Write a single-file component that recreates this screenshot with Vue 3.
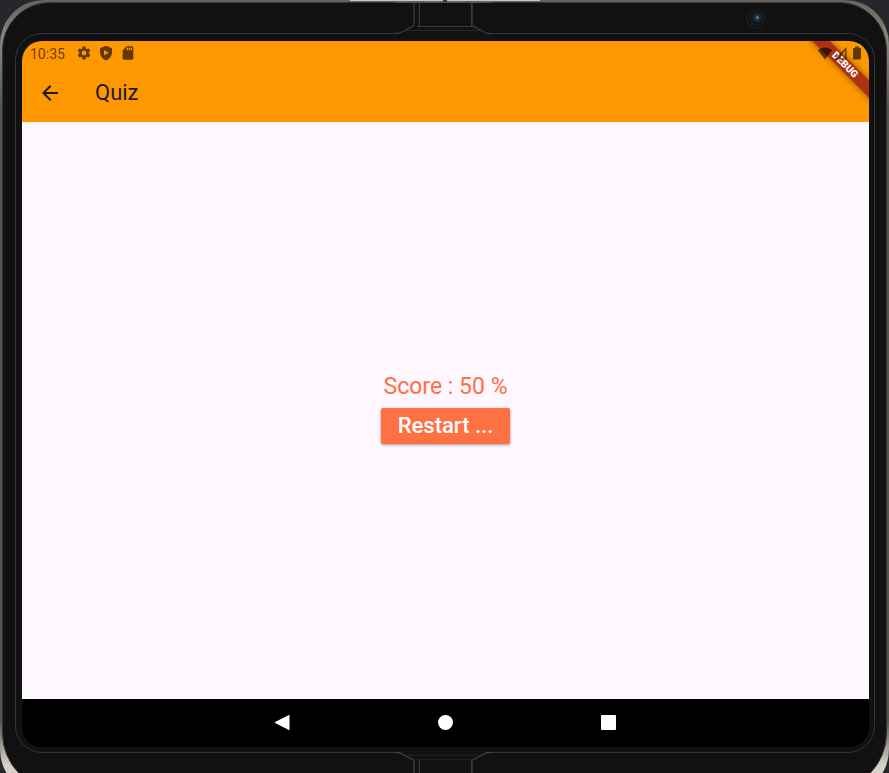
<script setup>
import { ref } from 'vue'

const score = ref(50)
const restart = () => {
  score.value = 0
}
</script>

<template>
  <div class="device">
    <div class="rim"></div>
    <div class="body"></div>
    <div class="groove"></div>
    <div class="strip"></div>
    <svg class="hinge top" width="96" height="37" viewBox="0 0 96 37" fill="none" aria-hidden="true">
      <path d="M0 2h96v35H0z" fill="#111" />
      <path d="M0 33.5h2q3 0 6-2l11-6V3M96 33.5h-2q-3 0-6-2l-11-6V3" stroke="#3b3b3d" stroke-width="1.3" />
      <path d="M24.500 3v23M76.500 3v23M22 26.500h55" stroke="#3a3a3c" />
      <path d="M12 30.500h74" stroke="#29292b" />
      <path d="M0 2.500h96" stroke="#55534f" />
      <path d="M48 0h4v2h-4z" fill="#343a43" />
    </svg>
    <svg class="hinge bottom" width="96" height="24" viewBox="0 0 96 24" fill="none" aria-hidden="true">
      <path d="M0 0h96v24H0z" fill="#111" />
      <path d="M0 3.500h2q3 0 6 2l11 6V24M96 3.500h-2q-3 0-6 2l-11 6V24" stroke="#414143" stroke-width="1.300" />
      <path d="M24.500 24V11M76.500 24V11" stroke="#38383a" />
      <path d="M13 6.500h70M20 10.500h57" stroke="#202022" />
    </svg>
    <div class="camera"></div>

    <main class="screen">
      <header class="top-area">
        <div class="status">
          <span class="clock">10:35</span>
          <div class="icons left">
            <svg viewBox="0 0 24 24" aria-hidden="true"><path d="M19.140 12.940c.040-.300.060-.610.060-.940 0-.320-.020-.640-.070-.940l2.030-1.580a.49.49 0 0 0 .12-.61l-1.920-3.320a.49.49 0 0 0-.59-.22l-2.390.96a7 7 0 0 0-1.620-.94l-.36-2.540a.48.48 0 0 0-.48-.41h-3.840a.47.47 0 0 0-.47.410l-.36 2.540a7.400 7.400 0 0 0-1.620.94l-2.390-.96a.48.48 0 0 0-.59.220L2.740 8.870a.47.47 0 0 0 .12.610l2.030 1.580a6 6 0 0 0-.02 1.880l-2.030 1.580a.49.49 0 0 0-.12.610l1.920 3.320c.12.220.37.290.59.220l2.390-.96c.5.380 1.030.700 1.620.940l.36 2.540c.05.240.240.410.480.410h3.840c.240 0 .44-.170.470-.410l.36-2.540a7.400 7.400 0 0 0 1.620-.94l2.390.96c.220.080.470 0 .59-.22l1.920-3.320a.47.47 0 0 0-.12-.61zM12 15.600a3.600 3.600 0 1 1 0-7.200 3.600 3.600 0 0 1 0 7.200z" /></svg>
            <svg viewBox="0 0 24 24" aria-hidden="true"><path fill-rule="evenodd" d="M12 1 3 5v6c0 5.550 3.840 10.740 9 12 5.160-1.260 9-6.450 9-12V5zM9 7.500v8l7-4z" /></svg>
            <svg viewBox="0 0 24 24" aria-hidden="true"><path d="M18 2h-8L4 8v12c0 1.100.9 2 2 2h12c1.100 0 2-.9 2-2V4c0-1.100-.9-2-2-2zm-6 6h-2V4h2zm3 0h-2V4h2zm3 0h-2V4h2z" /></svg>
          </div>
          <div class="icons right">
            <svg viewBox="0 0 16 16" aria-hidden="true"><path d="M8 14.500.8 5.300C4.800 1.600 11.200 1.600 15.200 5.300z" /></svg>
            <svg viewBox="0 0 16 16" aria-hidden="true"><path fill-rule="evenodd" d="M13.500 2v12.500H1.500zM12.200 5.200 7.800 10v3.200h4.400z" /></svg>
            <svg viewBox="0 0 16 16" aria-hidden="true"><path d="M6 1.500h4V3h1.300q.7 0 .7.700v10.100q0 .7-.7.700H4.700q-.7 0-.7-.7V3.700Q4 3 4.700 3H6z" /></svg>
          </div>
        </div>
        <div class="app-bar">
          <button class="back" type="button" aria-label="Back">
            <svg width="24" height="24" viewBox="0 0 24 24" aria-hidden="true"><path d="M20 11H7.830l5.590-5.590L12 4l-8 8 8 8 1.410-1.410L7.830 13H20z" /></svg>
          </button>
          <h1>Quiz</h1>
        </div>
        <div class="banner">DEBUG</div>
      </header>

      <section class="content">
        <p class="score">Score : {{ score }} %</p>
        <button class="restart" type="button" @click="restart">Restart ...</button>
      </section>

      <nav class="system-nav">
        <button type="button" aria-label="System back">
          <svg width="17" height="17" viewBox="0 0 17 17" aria-hidden="true"><path d="M15.500.8v15.400L1.500 9.200q-1.200-.7 0-1.400z" /></svg>
        </button>
        <button type="button" aria-label="Home">
          <svg width="17" height="17" viewBox="0 0 17 17" aria-hidden="true"><circle cx="8.500" cy="8.500" r="7.500" /></svg>
        </button>
        <button type="button" aria-label="Recent apps">
          <svg width="17" height="17" viewBox="0 0 17 17" aria-hidden="true"><rect x="1" y="1" width="15" height="15" rx="1" /></svg>
        </button>
      </nav>
    </main>
  </div>
</template>

<style>
body {
  margin: 0;
  background: #26272d;
}
</style>

<style scoped>
.device {
  position: relative;
  display: flex;
  box-sizing: border-box;
  min-height: 100vh;
  padding: 41px 20px 26px 22px;
  overflow: hidden;
  background: #26272d;
  font-family: Roboto, "Liberation Sans", sans-serif;
}

.rim,
.body,
.groove,
.strip,
.hinge,
.camera {
  position: absolute;
}

.rim {
  inset: 0 0 -24px;
  border-radius: 44px 44px 48px 48px;
  background: linear-gradient(#66635b, #8b877e 40px, #55524c 110px, #55524c 720px, #d5d1c7 765px);
}

.body {
  inset: 2px 2px -18px;
  border: 1px solid #35332f;
  border-radius: 48px 48px 58px 58px;
  background: #111;
}

.groove {
  inset: 33px 14px 20px 15px;
  border: 1px solid #353537;
  border-radius: 27px;
}

.strip {
  top: 0;
  left: 50%;
  width: 190px;
  height: 1px;
  margin-left: -95px;
  background: #c9c6b8;
}

.hinge {
  left: 50%;
  margin-left: -50px;
}

.top {
  top: 0;
}

.bottom {
  bottom: 0;
}

.camera {
  top: 8px;
  right: 122px;
  width: 21px;
  height: 21px;
  border-radius: 50%;
  background: radial-gradient(circle at 54% 46%, #52789b 0 1px, #1b3342 2px, #18212a 4px, #111519 6px, #191b1d 8px, #0b0c0d 9px, #202122 11px);
}

.screen {
  position: relative;
  display: flex;
  flex: 1;
  flex-direction: column;
  overflow: hidden;
  border-radius: 20px;
  background: #000;
}

.top-area {
  position: relative;
  padding-bottom: 1px;
  background: #ff9800;
  color: #1d1b20;
}

.status {
  position: relative;
  z-index: 1;
  display: flex;
  align-items: center;
  height: 24px;
  padding: 0 4px 0 8px;
  color: rgba(0, 0, 0, 0.62);
}

.clock {
  font-size: 14px;
  line-height: 16px;
  padding-top: 2px;
}

.icons {
  display: flex;
}

.icons svg {
  width: 16px;
  height: 16px;
  fill: currentColor;
}

.left {
  gap: 6px;
  margin-left: 11px;
}

.right {
  margin-left: auto;
}

.app-bar {
  display: flex;
  align-items: center;
  height: 56px;
  padding: 0 16px;
  gap: 33px;
}

button {
  border: 0;
  font-family: inherit;
  cursor: pointer;
}

.back {
  display: flex;
  padding: 0;
  background: none;
}

.back svg {
  fill: #1d1b20;
}

h1 {
  margin: 0;
  font-size: 22px;
  font-weight: 400;
  line-height: 28px;
}

.banner {
  position: absolute;
  top: 18px;
  right: -26px;
  width: 100px;
  height: 12px;
  transform: rotate(45deg);
  background: #ad3112;
  box-shadow: 0 0 6px rgba(0, 0, 0, 0.5);
  color: #fff;
  font-size: 10px;
  font-weight: 900;
  line-height: 12px;
  text-align: center;
}

.content {
  display: flex;
  flex: 1;
  flex-direction: column;
  align-items: center;
  justify-content: center;
  gap: 7px;
  padding-bottom: 5px;
  background: #fef7ff;
}

.score {
  margin: 0;
  color: #ff7043;
  font-size: 23px;
  line-height: 28px;
}

.restart {
  height: 36px;
  padding: 0 17px;
  border-radius: 2px;
  background: #ff7043;
  box-shadow: 0 1px 3px rgba(0, 0, 0, 0.4);
  color: #fff;
  font-size: 22px;
  font-weight: 500;
}

.system-nav {
  display: flex;
  align-items: center;
  justify-content: center;
  box-sizing: border-box;
  height: 48px;
  padding: 0 1px 1px 0;
  background: #000;
}

.system-nav button {
  display: flex;
  justify-content: center;
  width: 163px;
  padding: 15px 0;
  background: none;
}

.system-nav svg {
  fill: #fff;
}
</style>
